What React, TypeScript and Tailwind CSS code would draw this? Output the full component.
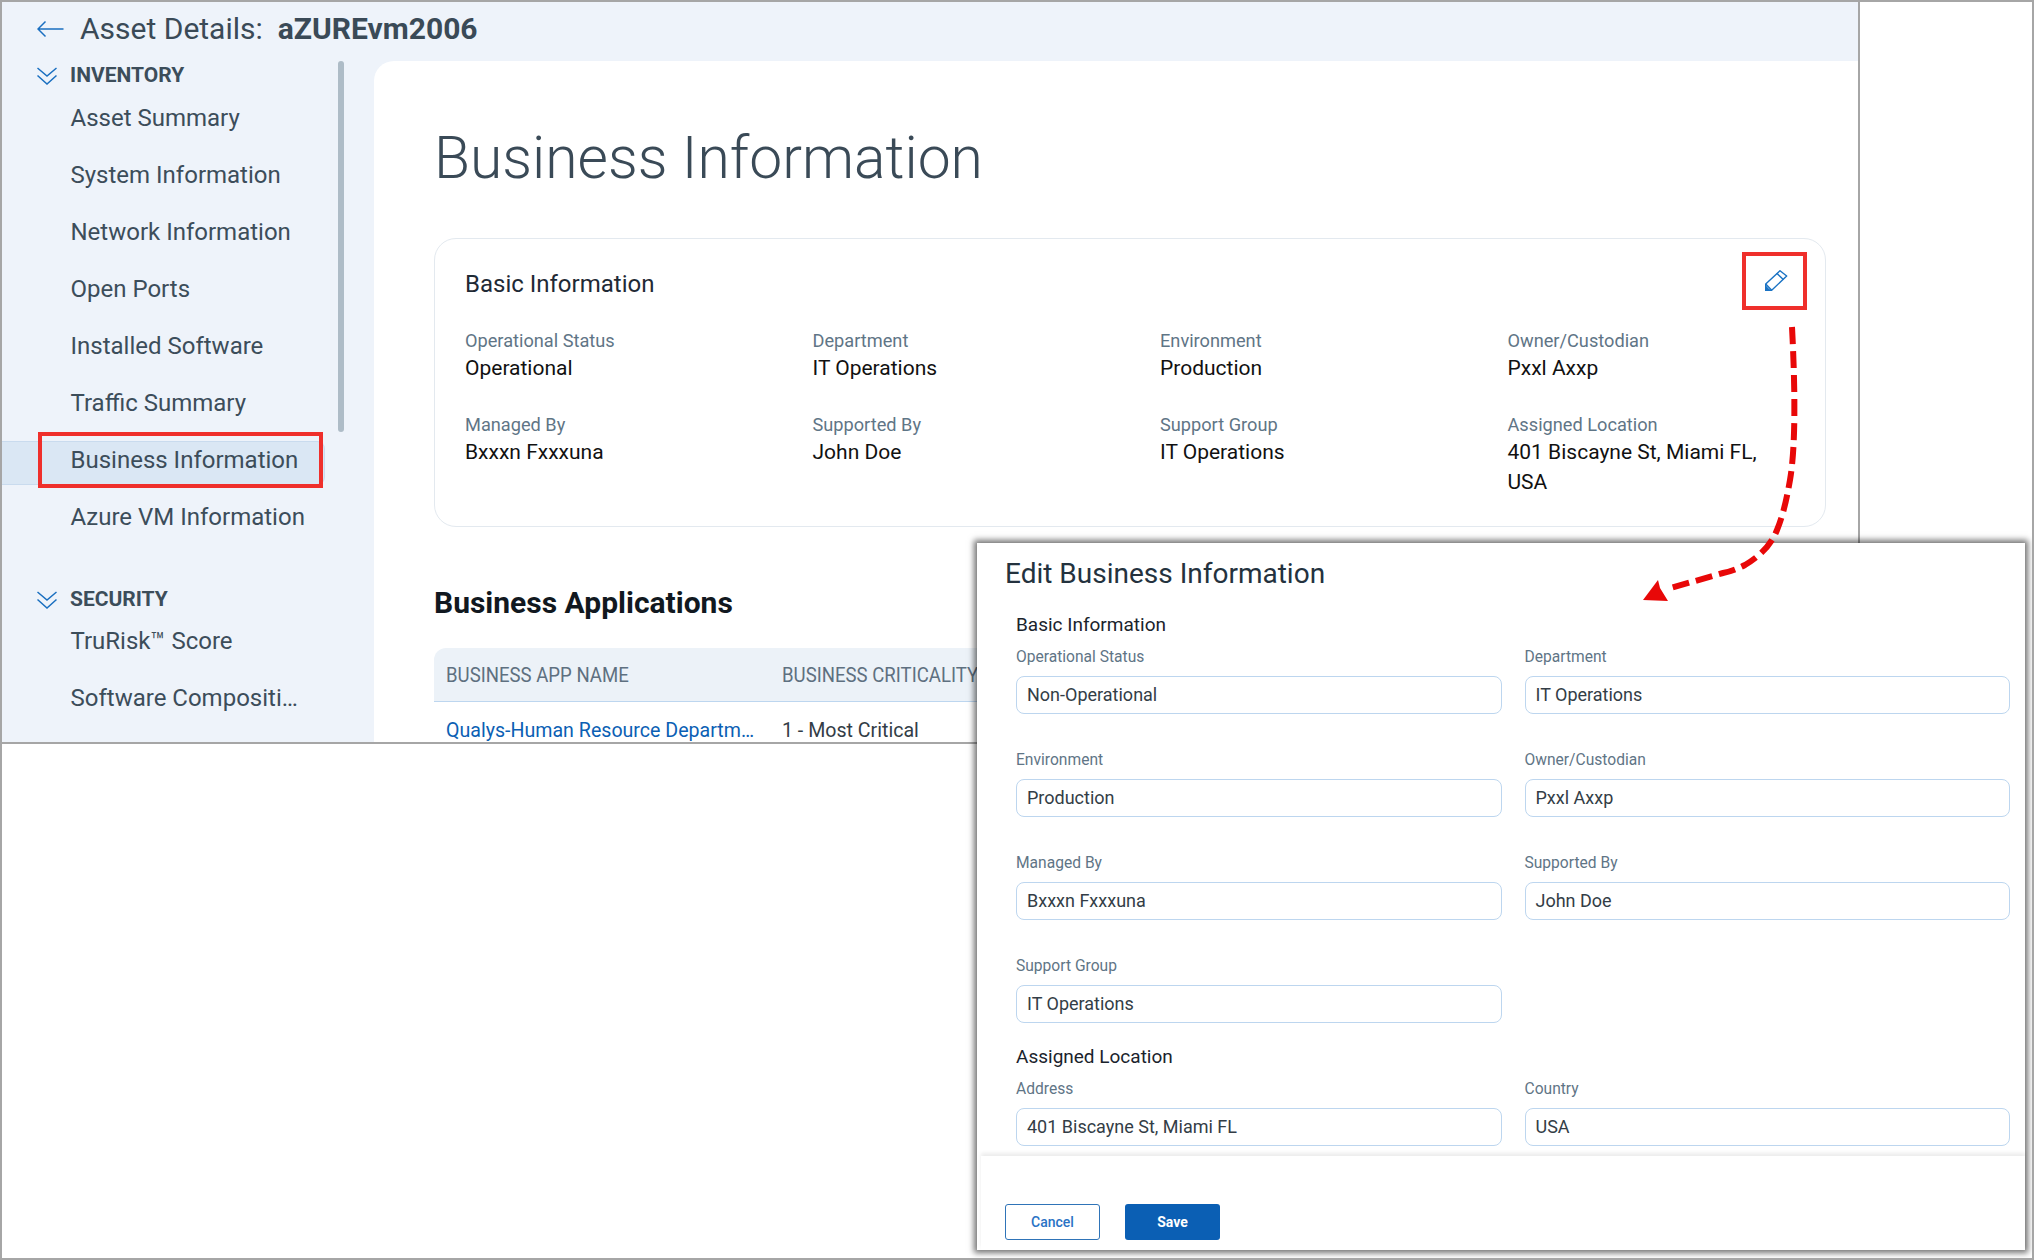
const navInventory = [
  "Asset Summary",
  "System Information",
  "Network Information",
  "Open Ports",
  "Installed Software",
  "Traffic Summary",
  "Business Information",
  "Azure VM Information",
];

const navSecurity = ["TruRisk™ Score", "Software Compositi…"];

const basicInfo = [
  { label: "Operational Status", value: "Operational" },
  { label: "Department", value: "IT Operations" },
  { label: "Environment", value: "Production" },
  { label: "Owner/Custodian", value: "Pxxl Axxp" },
  { label: "Managed By", value: "Bxxxn Fxxxuna" },
  { label: "Supported By", value: "John Doe" },
  { label: "Support Group", value: "IT Operations" },
  { label: "Assigned Location", value: "401 Biscayne St, Miami FL, USA" },
];

const editFields = [
  { label: "Operational Status", value: "Non-Operational" },
  { label: "Department", value: "IT Operations" },
  { label: "Environment", value: "Production" },
  { label: "Owner/Custodian", value: "Pxxl Axxp" },
  { label: "Managed By", value: "Bxxxn Fxxxuna" },
  { label: "Supported By", value: "John Doe" },
  { label: "Support Group", value: "IT Operations" },
];

function DoubleChevron() {
  return (
    <svg width="20" height="18" viewBox="0 0 20 18" fill="none" stroke="#1a6fc0" strokeWidth="1.5">
      <path d="M0.5 1l9.5 8 9.500-8" />
      <path d="M0.5 8.500l9.500 8.500 9.500-8.500" />
    </svg>
  );
}

function NavItem({ label, active }: { label: string; active?: boolean }) {
  return (
    <div className="flex h-[57px] items-center pt-[2px]">
      <div
        className={
          active
            ? "mt-[6px] flex h-[44px] w-[323px] items-center rounded-r-lg border border-l-0 border-[#c9dbee] bg-[#dae7f4] pb-[5px] pl-[68.500px] text-[24px] text-[#3c4d5a]"
            : "pl-[68.500px] text-[24px] text-[#3c4d5a]"
        }
      >
        {label}
      </div>
    </div>
  );
}

function Field({ label, value }: { label: string; value: string }) {
  return (
    <div>
      <div className="h-[20px] text-[15.600px] leading-[20px] text-[#5f7586]">{label}</div>
      <div className="mt-[9px] flex h-[38px] items-center rounded-lg border border-[#bdd6ef] pb-[2px] pl-[10px] text-[18px] text-[#333d46]">
        {value}
      </div>
    </div>
  );
}

export default function App() {
  return (
    <div className="relative h-[1260px] w-[2034px] overflow-hidden border-2 border-[#a6a6a6] bg-white font-['Roboto',sans-serif]">
      <div className="flex h-[742px] w-[1858px] flex-col overflow-hidden border-r-2 border-b-2 border-[#a6a6a6] bg-[#eef3fa]">
        <header className="flex h-[59px] shrink-0 items-center pb-[6px] pl-[35px]">
          <svg width="27" height="18" viewBox="0 0 27 18" fill="none" stroke="#1a6fc0" strokeWidth="1.5">
            <path d="M26.500 9H1M8.500 1.500L1 9l7.500 7.500" />
          </svg>
          <span className="ml-[16px] text-[30px] text-[#3a4a57]">Asset Details:</span>
          <span className="ml-[15px] text-[30px] font-bold text-[#3a4a57]">aZUREvm2006</span>
        </header>

        <div className="flex min-h-0 flex-1">
          <aside className="flex w-[372px] shrink-0">
            <nav className="w-[336px] shrink-0">
              <div className="mt-[3px] flex h-[24px] items-center gap-[13px] pl-[35px]">
                <DoubleChevron />
                <span className="text-[21px] font-bold text-[#3c4d5a]">INVENTORY</span>
              </div>
              {navInventory.map((item) => (
                <NavItem key={item} label={item} active={item === "Business Information"} />
              ))}
              <div className="mt-[44px] mb-[-1px] flex h-[24px] items-center gap-[13px] pl-[35px]">
                <DoubleChevron />
                <span className="text-[21px] font-bold text-[#3c4d5a]">SECURITY</span>
              </div>
              {navSecurity.map((item) => (
                <NavItem key={item} label={item} />
              ))}
            </nav>
            <div className="h-[371px] w-[6px] rounded-full bg-[#aebcc7]" />
          </aside>

          <main className="min-w-0 flex-1 rounded-tl-[20px] bg-white pr-[32px] pl-[60px]">
            <h1 className="mt-[61px] text-[58.750px] leading-[72px] font-light text-[#3a4a57]">Business Information</h1>

            <section className="mt-[44px] h-[289px] rounded-[22px] border border-[#e3e9ef] pt-[30px] pl-[30px]">
              <h2 className="text-[24px] leading-[30px] text-[#1f2a35]">Basic Information</h2>
              <div className="mt-[30px] grid grid-cols-[repeat(4,347.500px)] gap-y-[30px]">
                {basicInfo.map((f) => (
                  <div key={f.label} className="pr-[60px]">
                    <div className="text-[18.200px] leading-[24px] text-[#5f7586]">{f.label}</div>
                    <div className="text-[21px] leading-[30px] text-[#111111]">{f.value}</div>
                  </div>
                ))}
              </div>
            </section>

            <h2 className="mt-[58px] text-[30px] leading-[36px] font-bold text-[#111820]">Business Applications</h2>

            <div className="mt-[27px] flex h-[54px] items-center rounded-tl-xl border-b border-[#bdd6ef] bg-[#ecf2f8] pt-[2px] pl-[12px] text-[21px] text-[#5e7080]">
              <span className="w-[336px] shrink-0">
                <span className="inline-block origin-left scale-x-[0.885] whitespace-nowrap">BUSINESS APP NAME</span>
              </span>
              <span className="inline-block origin-left scale-x-[0.885] whitespace-nowrap">BUSINESS CRITICALITY</span>
            </div>
            <div className="flex pt-[17px] pl-[12px] text-[19.600px] leading-[23px]">
              <span className="w-[336px] shrink-0 whitespace-nowrap text-[#0b5fb4]">Qualys-Human Resource Departm…</span>
              <span className="text-[#333d46]">1 - Most Critical</span>
            </div>
          </main>
        </div>
      </div>

      {/* highlight boxes */}
      <div className="absolute top-[430px] left-[36px] h-[56px] w-[285px] border-4 border-[#ef2f2b]" />
      <div className="absolute top-[250px] left-[1740px] flex h-[58px] w-[65px] items-center justify-center border-4 border-[#ef2f2b] pl-[4px]">
        <svg width="23" height="22" viewBox="0 0 23 22" fill="none" stroke="#1a73c4" strokeWidth="1.4">
          <path d="M15 0.700L21.700 6 6.700 20.300H0.700V14Z" strokeLinejoin="round" />
          <path d="M11.700 3.200L18.300 9.400" />
          <path d="M0.700 14L6.700 20.300" />
          <path d="M0.700 16.500V20.300H4.500Z" fill="#1a73c4" />
        </svg>
      </div>

      {/* edit dialog */}
      <div className="absolute top-[541px] left-[975px] flex h-[707px] w-[1048px] flex-col bg-white shadow-[0_0_6px_3px_rgba(0,0,0,0.55)]">
        <h2 className="mt-[14px] ml-[28px] text-[28px] leading-[34px] text-[#24323e]">Edit Business Information</h2>
        <div className="mt-[22px] pr-[15px] pl-[39px]">
          <h3 className="text-[19px] leading-[24px] text-[#1a232c]">Basic Information</h3>
          <div className="mt-[10px] grid grid-cols-2 gap-x-[23px] gap-y-[36px]">
            {editFields.map((f) => (
              <Field key={f.label} label={f.label} value={f.value} />
            ))}
          </div>
          <h3 className="mt-[22px] text-[19px] leading-[24px] text-[#1a232c]">Assigned Location</h3>
          <div className="mt-[10px] grid grid-cols-2 gap-x-[23px]">
            <Field label="Address" value="401 Biscayne St, Miami FL" />
            <Field label="Country" value="USA" />
          </div>
        </div>
        <footer className="mt-auto ml-[4px] flex h-[94px] gap-[25px] bg-white pt-[48px] pl-[24px] shadow-[0_-3px_4px_rgba(0,0,0,0.08)]">
          <button className="h-[36px] w-[95px] rounded-[3px] border border-[#2f74b8] text-[14px] font-medium text-[#2a73c5]">
            Cancel
          </button>
          <button className="h-[36px] w-[95px] rounded-[3px] bg-[#0b5fb4] text-[14px] font-bold text-white">
            Save
          </button>
        </footer>
      </div>

      {/* annotation arrow */}
      <svg className="absolute top-[-2px] left-[-2px]" width="2034" height="1260" fill="none" pointerEvents="none">
        <path
          d="M1792 327C1795 385 1796 445 1790 480C1786 503 1782 518 1777 530C1771 545 1760 556 1745 565C1735 570 1728 572 1723 573L1667 589"
          stroke="#e80808"
          strokeWidth="6"
          strokeDasharray="17 7"
        />
        <path d="M1643 600L1658 580L1660 588L1668 601Z" fill="#e80808" />
      </svg>
    </div>
  );
}
